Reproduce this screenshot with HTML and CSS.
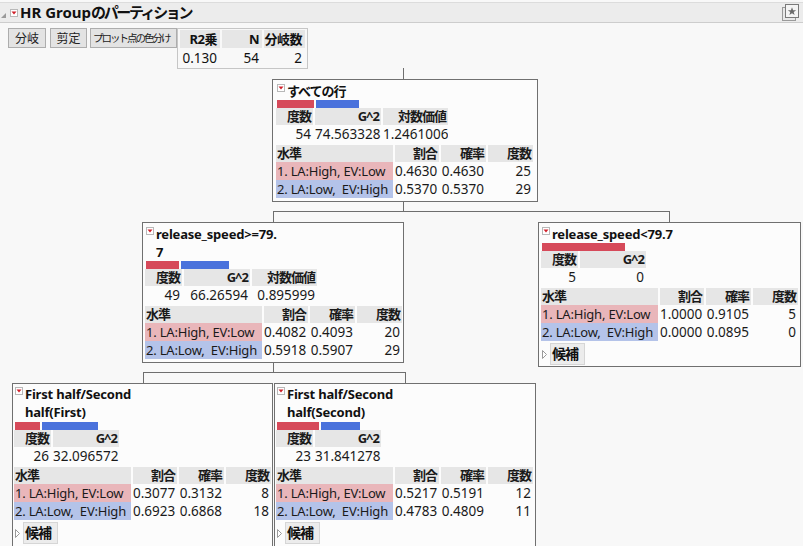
FILE: index.html
```html
<!DOCTYPE html>
<html lang="ja">
<head>
<meta charset="utf-8">
<title>HR Groupのパーティション</title>
<link rel="stylesheet" href="styles.css">
</head>
<body>
<div class="titlebar">
  <svg class="disc" width="5" height="5" viewBox="0 0 5 5"><path d="M5 0 L5 5 L0 5 Z" fill="#9a9a9a"/></svg>
  <svg class="rt" width="8" height="8" viewBox="0 0 8 8"><rect x="0.5" y="0.5" width="7" height="7" fill="#fff" stroke="#b8b8b8"/><path d="M1.5 2.5 L6.5 2.5 L4 5.5 Z" fill="#d0202a"/></svg>
  <h1 class="title">HR Group<span class="jp">のパーティション</span></h1>
  <svg class="pin" width="18" height="18" viewBox="0 0 18 18"><rect x="0.5" y="3.5" width="13" height="13" fill="#e8e8e8" stroke="#9a9a9a"/><rect x="3.5" y="0.5" width="13" height="13" fill="#f4f4f4" stroke="#7a7a7a"/><path d="M10 3.2 L11.1 6.2 L14.2 6.2 L11.7 8.1 L12.6 11.1 L10 9.3 L7.4 11.1 L8.3 8.1 L5.8 6.2 L8.9 6.2 Z" fill="#6a6a6a"/></svg>
</div>

<div class="toolbar">
  <button class="btn b1">分岐</button>
  <button class="btn b2">剪定</button>
  <button class="btn b3">プロット点の色分け</button>
  <table class="summary">
    <tr><th class="s1">R2乗</th><th class="s2">N</th><th class="s3">分岐数</th></tr>
    <tr><td>0.130</td><td>54</td><td>2</td></tr>
  </table>
</div>

<div class="tree">
  <div class="line v l1"></div>
  <div class="line v l2"></div>
  <div class="line h l3"></div>
  <div class="line v l4"></div>
  <div class="line v l5"></div>
  <div class="line v l6"></div>
  <div class="line h l7"></div>
  <div class="line v l8"></div>
  <div class="line v l9"></div>

  <div class="node n-root">
    <div class="ntitle"><svg class="rt" width="8" height="8" viewBox="0 0 8 8"><rect x="0.5" y="0.5" width="7" height="7" fill="#fff" stroke="#b8b8b8"/><path d="M1.5 2.5 L6.5 2.5 L4 5.5 Z" fill="#d0202a"/></svg><span class="ttext jp">すべての行</span></div>
    <div class="bars"><span class="bar red" style="width:37px"></span><span class="bar blue" style="width:43px"></span></div>
    <table class="stats s3col">
      <tr><th class="c1">度数</th><th class="c2">G^2</th><th class="c3">対数価値</th></tr>
      <tr><td>54</td><td>74.563328</td><td>1.2461006</td></tr>
    </table>
    <table class="levels">
      <tr><th class="lv">水準</th><th class="k1">割合</th><th class="k2">確率</th><th class="k3">度数</th></tr>
      <tr><td class="lv pink">1. LA:High, EV:Low</td><td>0.4630</td><td>0.4630</td><td>25</td></tr>
      <tr><td class="lv lblue">2. LA:Low,  EV:High</td><td>0.5370</td><td>0.5370</td><td>29</td></tr>
    </table>
  </div>

  <div class="node n-left">
    <div class="ntitle"><svg class="rt" width="8" height="8" viewBox="0 0 8 8"><rect x="0.5" y="0.5" width="7" height="7" fill="#fff" stroke="#b8b8b8"/><path d="M1.5 2.5 L6.5 2.5 L4 5.5 Z" fill="#d0202a"/></svg><span class="ttext">release_speed&gt;=79.<br>7</span></div>
    <div class="bars"><span class="bar red" style="width:33px"></span><span class="bar blue" style="width:48px"></span></div>
    <table class="stats s3col">
      <tr><th class="c1">度数</th><th class="c2">G^2</th><th class="c3">対数価値</th></tr>
      <tr><td>49</td><td>66.26594</td><td>0.895999</td></tr>
    </table>
    <table class="levels">
      <tr><th class="lv">水準</th><th class="k1">割合</th><th class="k2">確率</th><th class="k3">度数</th></tr>
      <tr><td class="lv pink">1. LA:High, EV:Low</td><td>0.4082</td><td>0.4093</td><td>20</td></tr>
      <tr><td class="lv lblue">2. LA:Low,  EV:High</td><td>0.5918</td><td>0.5907</td><td>29</td></tr>
    </table>
  </div>

  <div class="node n-right">
    <div class="ntitle"><svg class="rt" width="8" height="8" viewBox="0 0 8 8"><rect x="0.5" y="0.5" width="7" height="7" fill="#fff" stroke="#b8b8b8"/><path d="M1.5 2.5 L6.5 2.5 L4 5.5 Z" fill="#d0202a"/></svg><span class="ttext">release_speed&lt;79.7</span></div>
    <div class="bars"><span class="bar red" style="width:83px"></span></div>
    <table class="stats s2col">
      <tr><th class="c1">度数</th><th class="c2">G^2</th></tr>
      <tr><td>5</td><td>0</td></tr>
    </table>
    <table class="levels">
      <tr><th class="lv">水準</th><th class="k1">割合</th><th class="k2">確率</th><th class="k3">度数</th></tr>
      <tr><td class="lv pink">1. LA:High, EV:Low</td><td>1.0000</td><td>0.9105</td><td>5</td></tr>
      <tr><td class="lv lblue">2. LA:Low,  EV:High</td><td>0.0000</td><td>0.0895</td><td>0</td></tr>
    </table>
    <div class="cand"><svg class="ctri" width="5" height="9" viewBox="0 0 5 9"><path d="M0.5 0.5 L4.5 4.5 L0.5 8.5 Z" fill="#fff" stroke="#9a9a9a"/></svg><span class="cbtn">候補</span></div>
  </div>

  <div class="node n-ll">
    <div class="ntitle"><svg class="rt" width="8" height="8" viewBox="0 0 8 8"><rect x="0.5" y="0.5" width="7" height="7" fill="#fff" stroke="#b8b8b8"/><path d="M1.5 2.5 L6.5 2.5 L4 5.5 Z" fill="#d0202a"/></svg><span class="ttext">First half/Second<br>half(First)</span></div>
    <div class="bars"><span class="bar red" style="width:25px"></span><span class="bar blue" style="width:56px"></span></div>
    <table class="stats s2col">
      <tr><th class="c1">度数</th><th class="c2">G^2</th></tr>
      <tr><td>26</td><td>32.096572</td></tr>
    </table>
    <table class="levels">
      <tr><th class="lv">水準</th><th class="k1">割合</th><th class="k2">確率</th><th class="k3">度数</th></tr>
      <tr><td class="lv pink">1. LA:High, EV:Low</td><td>0.3077</td><td>0.3132</td><td>8</td></tr>
      <tr><td class="lv lblue">2. LA:Low,  EV:High</td><td>0.6923</td><td>0.6868</td><td>18</td></tr>
    </table>
    <div class="cand"><svg class="ctri" width="5" height="9" viewBox="0 0 5 9"><path d="M0.5 0.5 L4.5 4.5 L0.5 8.5 Z" fill="#fff" stroke="#9a9a9a"/></svg><span class="cbtn">候補</span></div>
  </div>

  <div class="node n-lr">
    <div class="ntitle"><svg class="rt" width="8" height="8" viewBox="0 0 8 8"><rect x="0.5" y="0.5" width="7" height="7" fill="#fff" stroke="#b8b8b8"/><path d="M1.5 2.5 L6.5 2.5 L4 5.5 Z" fill="#d0202a"/></svg><span class="ttext">First half/Second<br>half(Second)</span></div>
    <div class="bars"><span class="bar red" style="width:42px"></span><span class="bar blue" style="width:39px"></span></div>
    <table class="stats s2col">
      <tr><th class="c1">度数</th><th class="c2">G^2</th></tr>
      <tr><td>23</td><td>31.841278</td></tr>
    </table>
    <table class="levels">
      <tr><th class="lv">水準</th><th class="k1">割合</th><th class="k2">確率</th><th class="k3">度数</th></tr>
      <tr><td class="lv pink">1. LA:High, EV:Low</td><td>0.5217</td><td>0.5191</td><td>12</td></tr>
      <tr><td class="lv lblue">2. LA:Low,  EV:High</td><td>0.4783</td><td>0.4809</td><td>11</td></tr>
    </table>
    <div class="cand"><svg class="ctri" width="5" height="9" viewBox="0 0 5 9"><path d="M0.5 0.5 L4.5 4.5 L0.5 8.5 Z" fill="#fff" stroke="#9a9a9a"/></svg><span class="cbtn">候補</span></div>
  </div>
</div>
</body>
</html>
```

FILE: styles.css
```css
* { box-sizing: border-box; }
html, body { margin: 0; padding: 0; }
body {
  width: 803px;
  height: 546px;
  overflow: hidden;
  background: #f8f8f8;
  font-family: "Noto Sans", "Noto Sans CJK JP", sans-serif;
  font-size: 13px;
  color: #111;
}
.jp { letter-spacing: -1px; }

/* title bar */
.titlebar {
  margin-top: 2px;
  height: 21px;
  display: flex;
  align-items: center;
  background: #ececec;
  border-top: 1px solid #dcdcdc;
  border-bottom: 1px solid #cdcdcd;
}
.titlebar .disc { margin: 5px 0 0 1px; }
.titlebar .rt { margin-left: 4px; margin-top: 1px; }
.title {
  margin: 0 0 0 2px;
  font-size: 15px;
  font-weight: bold;
  line-height: 19px;
  color: #111;
}
.title .jp { letter-spacing: -2.4px; }
.pin { margin-left: auto; margin-right: 3px; }

/* toolbar */
.toolbar {
  height: 45px;
  display: flex;
  align-items: flex-start;
  padding: 5px 0 0 8px;
}
.btn {
  height: 20px;
  margin: 0;
  padding: 0;
  background: #e3e3e3;
  border: 1px solid #adadad;
  font-family: "Noto Sans", "Noto Sans CJK JP", sans-serif;
  font-size: 12px;
  color: #222;
  line-height: 17px;
  white-space: nowrap;
  overflow: hidden;
}
.b1 { width: 38px; }
.b2 { width: 37px; margin-left: 4px; }
.b3 { width: 87px; margin-left: 3px; font-size: 10.5px; letter-spacing: -2px; text-align: left; padding-left: 2px; }
.summary {
  border: 1px solid #c6c6c6;
  border-collapse: separate;
  border-spacing: 2px 1px;
  height: 39px;
  background: #f8f8f8;
}
.summary th, .summary td {
  padding: 0 3px 0 0;
  text-align: right;
  height: 18px;
  line-height: 17px;
}
.summary td { font-size: 13.5px; }
.summary th { background: #e6e6e6; font-weight: bold; letter-spacing: -0.5px; }
.summary .s1 { width: 40px; }
.summary .s2 { width: 40px; }
.summary .s3 { width: 41px; }

/* tree canvas */
.tree {
  position: relative;
  height: 478px;
  overflow: hidden;
}
.line { position: absolute; background: #6e6e6e; }
.line.v { width: 1px; }
.line.h { height: 1px; }
.l1 { left: 403px; top: 0; height: 11px; }
.l2 { left: 403px; top: 134px; height: 10px; }
.l3 { left: 273px; top: 143px; width: 397px; }
.l4 { left: 273px; top: 143px; height: 11px; }
.l5 { left: 669px; top: 143px; height: 11px; }
.l6 { left: 273px; top: 294px; height: 10px; }
.l7 { left: 143px; top: 304px; width: 263px; }
.l8 { left: 143px; top: 304px; height: 11px; }
.l9 { left: 405px; top: 304px; height: 11px; }

.node {
  position: absolute;
  background: #fcfcfc;
  border: 1px solid #707070;
  padding: 2px 3px 3px 3px;
}
.n-root { left: 272px; top: 11px; width: 266px; }
.n-left { left: 142px; top: 154px; width: 262px; padding-left: 2px; }
.n-right { left: 538px; top: 154px; width: 263px; padding-left: 2px; padding-bottom: 1px; }
.n-ll { left: 12px; top: 315px; width: 261px; height: 170px; padding-top: 1px; padding-left: 1px; }
.n-lr { left: 274px; top: 315px; width: 262px; height: 170px; padding-top: 1px; padding-left: 1px; }

.ntitle {
  display: flex;
  align-items: flex-start;
  font-weight: bold;
  font-size: 13px;
  line-height: 18px;
  color: #111;
}
.ntitle .rt { flex: none; margin: 2px 2px 0 1px; }
.ttext { letter-spacing: -0.2px; }
.ttext.jp { letter-spacing: -1px; }

.bars { display: flex; gap: 2px; height: 8px; margin-left: 1px; }
.n-ll .bars, .n-lr .bars { margin-top: 1px; }
.bar { display: block; height: 8px; }
.bar.red { background: #d64a5a; }
.bar.blue { background: #4a72dc; }

table.stats, table.levels {
  border-collapse: separate;
  border-spacing: 2px 0;
  margin-left: -2px;
  table-layout: fixed;
}
table.s3col { width: 176px; }
table.s2col { width: 109px; }
table.levels { width: 261px; margin-top: 2px; }
.stats th, .levels th {
  background: #e6e6e6;
  font-weight: bold;
  font-size: 13px;
  height: 17px;
  line-height: 17px;
  padding: 0 2px 0 0;
  text-align: right;
  letter-spacing: -1px;
  color: #1a1a1a;
}
.stats td, .levels td {
  height: 18px;
  line-height: 18px;
  font-size: 13.5px;
  padding: 0 2px 0 0;
  text-align: right;
  white-space: nowrap;
  overflow: hidden;
  color: #1a1a1a;
}
.stats .c1 { width: 37px; }
.stats .c2 { width: 66px; }
.stats .c3 { width: 65px; }

.levels .lv { width: 117px; text-align: left; padding: 0 0 0 1px; white-space: pre; }
.levels td.lv { font-size: 13px; letter-spacing: -0.2px; }
.levels .k1 { width: 44px; }
.levels .k2 { width: 45px; }
.levels .k3 { width: 45px; }
.levels .pink { background: #e9b6ba; }
.levels .lblue { background: #b4c3e9; }

.cand {
  display: flex;
  align-items: center;
  margin-top: 2px;
  height: 22px;
}
.ctri { margin: 0 3px 0 1px; }
.cbtn {
  width: 35px;
  height: 22px;
  background: #ececec;
  border: 1px solid #d6d6d6;
  font-weight: bold;
  font-size: 14px;
  line-height: 19px;
  padding-left: 1px;
  letter-spacing: -1px;
  color: #111;
}
```
